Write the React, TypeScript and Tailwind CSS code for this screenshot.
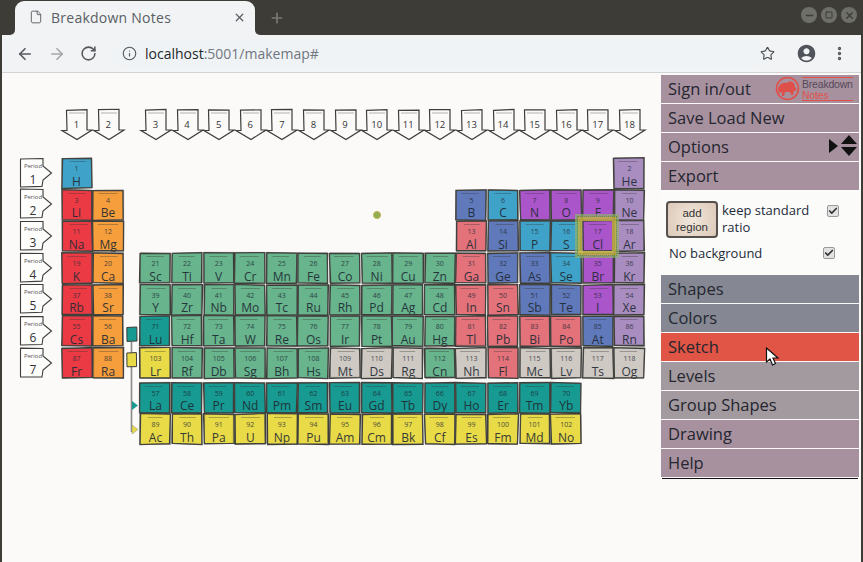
import { ArrowLeft, ArrowRight, Check, File, Info, Minus, MoreVertical, Plus, RotateCw, Square, Star, X } from "lucide-react";
import { MdAccountCircle } from "react-icons/md";

const blue = "bg-[#3fa3c9]";
const red = "bg-[#ec3a45]";
const orange = "bg-[#f69e3c]";
const green = "bg-[#67b48d]";
const teal = "bg-[#179a92]";
const yellow = "bg-[#e9da48]";
const gray = "bg-[#cec9c3]";
const pink = "bg-[#e4727b]";
const slate = "bg-[#6079bb]";
const purple = "bg-[#ab55cb]";
const lav = "bg-[#a98dc1]";

type Cell = { n: number; s: string; c: string; col: number; row: number };

// [symbol, colour, group] per element, row by row
const rows: [string, string, number][][] = [
  [["H", blue, 1], ["He", lav, 18]],
  [["Li", red, 1], ["Be", orange, 2], ["B", slate, 13], ["C", blue, 14], ["N", purple, 15], ["O", purple, 16], ["F", purple, 17], ["Ne", lav, 18]],
  [["Na", red, 1], ["Mg", orange, 2], ["Al", pink, 13], ["Si", slate, 14], ["P", blue, 15], ["S", blue, 16], ["Cl", purple, 17], ["Ar", lav, 18]],
  [["K", red, 1], ["Ca", orange, 2], ...["Sc", "Ti", "V", "Cr", "Mn", "Fe", "Co", "Ni", "Cu", "Zn"].map((s, i): [string, string, number] => [s, green, i + 3]), ["Ga", pink, 13], ["Ge", slate, 14], ["As", slate, 15], ["Se", blue, 16], ["Br", purple, 17], ["Kr", lav, 18]],
  [["Rb", red, 1], ["Sr", orange, 2], ...["Y", "Zr", "Nb", "Mo", "Tc", "Ru", "Rh", "Pd", "Ag", "Cd"].map((s, i): [string, string, number] => [s, green, i + 3]), ["In", pink, 13], ["Sn", pink, 14], ["Sb", slate, 15], ["Te", slate, 16], ["I", purple, 17], ["Xe", lav, 18]],
  [["Cs", red, 1], ["Ba", orange, 2], ["Lu", teal, 3], ...["Hf", "Ta", "W", "Re", "Os", "Ir", "Pt", "Au", "Hg"].map((s, i): [string, string, number] => [s, green, i + 4]), ["Tl", pink, 13], ["Pb", pink, 14], ["Bi", pink, 15], ["Po", pink, 16], ["At", slate, 17], ["Rn", lav, 18]],
  [["Fr", red, 1], ["Ra", orange, 2], ["Lr", yellow, 3], ...["Rf", "Db", "Sg", "Bh", "Hs"].map((s, i): [string, string, number] => [s, green, i + 4]), ["Mt", gray, 9], ["Ds", gray, 10], ["Rg", gray, 11], ["Cn", green, 12], ["Nh", gray, 13], ["Fl", pink, 14], ["Mc", gray, 15], ["Lv", gray, 16], ["Ts", gray, 17], ["Og", gray, 18]],
];

const numbers = [
  [1, 2],
  [3, 4, 5, 6, 7, 8, 9, 10],
  [11, 12, 13, 14, 15, 16, 17, 18],
  [19, 20, 21, 22, 23, 24, 25, 26, 27, 28, 29, 30, 31, 32, 33, 34, 35, 36],
  [37, 38, 39, 40, 41, 42, 43, 44, 45, 46, 47, 48, 49, 50, 51, 52, 53, 54],
  [55, 56, 71, 72, 73, 74, 75, 76, 77, 78, 79, 80, 81, 82, 83, 84, 85, 86],
  [87, 88, 103, 104, 105, 106, 107, 108, 109, 110, 111, 112, 113, 114, 115, 116, 117, 118],
];

// groups 1-2 sit after the period column, the rest after the little spacer column
const groupCol = (g: number) => (g < 3 ? g + 1 : g + 2);

const cells: Cell[] = rows.flatMap((row, r) =>
  row.map(([s, c, g], i) => ({ n: numbers[r][i], s, c, col: groupCol(g), row: r + 2 }))
);
["La", "Ce", "Pr", "Nd", "Pm", "Sm", "Eu", "Gd", "Tb", "Dy", "Ho", "Er", "Tm", "Yb"].forEach((s, i) =>
  cells.push({ n: 57 + i, s, c: teal, col: groupCol(i + 3), row: 10 })
);
["Ac", "Th", "Pa", "U", "Np", "Pu", "Am", "Cm", "Bk", "Cf", "Es", "Fm", "Md", "No"].forEach((s, i) =>
  cells.push({ n: 89 + i, s, c: yellow, col: groupCol(i + 3), row: 11 })
);

const jitter = (seed: number, amp: number) => {
  const v = Math.sin(seed * 12.9898) * 43758.5453;
  return +(((v - Math.floor(v)) - 0.5) * 2 * amp).toFixed(2);
};

function sketchPath(seed: number, x0: number, y0: number, x1: number, y1: number) {
  const p = [
    [x0, y0],
    [x1, y0],
    [x1, y1],
    [x0, y1],
  ].map(([x, y], i) => `${x + jitter(seed + i, 0.7)} ${y + jitter(seed + i + 9, 0.7)}`);
  return `M${p[0]} L${p[1]} L${p[2]} L${p[3]} Z`;
}

function ElementCell({ n, s, c, col, row }: Cell) {
  return (
    <div className={`relative ${s === "Cl" ? "z-10" : ""}`} style={{ gridColumn: col, gridRow: row }}>
      <div className={`relative w-[30px] h-[30px] mt-[0.5px] ml-[0.5px] flex flex-col items-center pt-[7px] text-[#1f2a33] ${c}`}>
        <span className="text-[7px] leading-[8px] opacity-80">{n}</span>
        <span className="text-[12px] leading-[13px] mt-[1.5px] opacity-90">{s}</span>
        <svg viewBox="0 0 30 30" className="absolute inset-0 w-[30px] h-[30px] overflow-visible" fill="none">
          <path d={sketchPath(n, 0, 0, 30, 30)} stroke="#3d3d39" strokeWidth="1.3" />
          <path d={sketchPath(n + 31, 0, 0, 30, 30)} stroke="#4b4b47" strokeWidth="0.8" opacity="0.7" />
          <path d={`M${6 + jitter(n, 2)} 3.5 L${24 + jitter(n + 2, 2)} 3.5`} stroke="#333" strokeWidth="0.7" opacity="0.5" />
        </svg>
      </div>
      {s === "Cl" && (
        <div className="absolute left-[-7px] top-[-7px] w-[44px] h-[44px] border-[3px] border-[#8cb06c]/70">
          <div className="w-full h-full border-[4px] border-[#c4b53e]/80 outline-1 outline-dotted outline-[#6f8c3a]" />
        </div>
      )}
    </div>
  );
}

function GroupArrow({ g }: { g: number }) {
  return (
    <div className="relative w-[31px] h-[31px] flex justify-center pt-[8px]" style={{ gridColumn: groupCol(g), gridRow: 1 }}>
      <svg viewBox="0 0 31 31" className="absolute inset-0 w-[31px] h-[31px] overflow-visible" fill="#fbfaf9">
        <path
          d={`M5.5 ${1 + jitter(g, 0.5)} L26 ${0.6 + jitter(g + 5, 0.5)} L26 21 L31 21 L16 30.5 L1 21.5 L6 21.5 Z`}
          stroke="#3d3d39"
          strokeWidth="1.2"
        />
        <path d="M8 4 L24 4" stroke="#555" strokeWidth="0.6" opacity="0.7" />
      </svg>
      <span className="relative text-[9.5px] leading-[12px] mt-[2px] text-[#333]">{g}</span>
    </div>
  );
}

function PeriodTag({ p }: { p: number }) {
  return (
    <div className="relative w-[32px] h-[30px] flex flex-col items-start pl-[2px]" style={{ gridColumn: 1, gridRow: p + 1 }}>
      <svg viewBox="0 0 32 30" className="absolute inset-0 w-[32px] h-[30px] overflow-visible" fill="#fdfdfc">
        <path
          d={`M0.5 ${0.5 + jitter(p, 0.6)} L23 0.5 L23 8 L31.5 15 L23 22 L22 ${28.5 + jitter(p + 3, 0.6)} L0.5 29 Z`}
          stroke="#3d3d39"
          strokeWidth="1.1"
        />
      </svg>
      <span className="relative w-[22px] text-center text-[6px] leading-[8px] mt-[4px] text-[#555]">Period</span>
      <span className="relative w-[22px] text-center text-[12px] leading-[12px] mt-[4px] text-[#333]">{p}</span>
    </div>
  );
}

function MenuItem({ label, color }: { label: string; color: string }) {
  return (
    <div className={`h-[28px] mb-[1px] pl-[7px] text-[16.5px] leading-[28px] text-[#242630] ${color}`}>{label}</div>
  );
}

function CheckBox() {
  return (
    <span className="w-[12px] h-[12px] rounded-[2px] border border-[#9a9a9a] bg-[#e2e2e2] flex items-center justify-center shrink-0">
      <Check size={10} strokeWidth={4} className="text-[#333]" />
    </span>
  );
}

function Logo() {
  return (
    <div className="absolute right-[6px] top-[1px] w-[78px] h-[25px] flex items-center">
      <svg viewBox="0 0 25 25" className="w-[25px] h-[25px] shrink-0">
        <circle cx="12.5" cy="12.5" r="11" fill="none" stroke="#e0504a" strokeWidth="1.6" />
        <path d="M3 13 C4 8 8 6 12 7 C15 4 20 6 20 11 L22 14 L19 15 L18 19 L16 19 L15 16 L10 16 L9 20 L7 20 L7 16 L4 17 Z" fill="#e0504a" />
      </svg>
      <div className="flex flex-col ml-[2px] w-[52px] border-t border-[#e0504a] font-['Liberation_Sans',sans-serif]">
        <span className="text-[10.5px] leading-[12px] text-[#54495a] tracking-[-0.2px]">Breakdown</span>
        <span className="text-[10.5px] leading-[10px] text-[#e0504a] border-b border-[#e0504a] tracking-[-0.2px]">Notes</span>
      </div>
    </div>
  );
}

export default function App() {
  return (
    <div className="w-[863px] h-[562px] overflow-hidden bg-[#3d3c37] font-['Open_Sans',sans-serif] flex flex-col">
      {/* title bar */}
      <div className="h-[35px] shrink-0 flex items-end relative pl-[15px]">
        <div className="relative w-[240px] h-[34px] bg-[#f1f3f4] rounded-t-[9px] flex items-center pl-[14px] pr-[9px] pb-[2px] text-[#5a5f66]">
          <span className="absolute left-[-5px] bottom-0 w-[5px] h-[5px] bg-[#f1f3f4]">
            <span className="block w-[5px] h-[5px] bg-[#3d3c37] rounded-br-[5px]" />
          </span>
          <span className="absolute right-[-5px] bottom-0 w-[5px] h-[5px] bg-[#f1f3f4]">
            <span className="block w-[5px] h-[5px] bg-[#3d3c37] rounded-bl-[5px]" />
          </span>
          <File size={14} strokeWidth={1.6} />
          <span className="ml-[8px] text-[14px] tracking-[0.25px] flex-1">Breakdown Notes</span>
          <X size={13} strokeWidth={2.4} />
        </div>
        <Plus size={16} strokeWidth={2.5} className="ml-[14px] mb-[9px] text-[#7a7a75]" />
        <div className="absolute right-[6px] top-[7px] flex gap-[4px] text-[#3d3c37]">
          <span className="w-[16px] h-[16px] rounded-full bg-[#6f6f6a] flex items-center justify-center"><Minus size={11} strokeWidth={3} /></span>
          <span className="w-[16px] h-[16px] rounded-full bg-[#6f6f6a] flex items-center justify-center"><Square size={8} strokeWidth={3} /></span>
          <span className="w-[16px] h-[16px] rounded-full bg-[#6f6f6a] flex items-center justify-center"><X size={11} strokeWidth={3} /></span>
        </div>
      </div>

      <div className="flex-1 mx-[2px] flex flex-col min-h-0">
        {/* toolbar */}
        <div className="h-[38px] shrink-0 bg-[#f1f3f4] border-b border-[#d2d3d4] flex items-center pl-[14px] pr-[12px] text-[#55595e]">
          <ArrowLeft size={18} strokeWidth={2.2} />
          <ArrowRight size={18} strokeWidth={2.2} className="ml-[14px] text-[#a4a6a8]" />
          <RotateCw size={17} strokeWidth={2.2} className="ml-[14px]" />
          <div className="ml-[15px] w-[655px] h-[28px] rounded-full bg-[#eff3f5] flex items-center pl-[10px]">
            <Info size={15} strokeWidth={1.8} />
            <span className="ml-[8px] text-[14px] text-[#23272c]">localhost</span>
            <span className="text-[14px] text-[#6f7680]">:5001/makemap#</span>
          </div>
          <Star size={15} strokeWidth={1.8} className="ml-[-7px] text-[#4a4d52]" />
          <MdAccountCircle size={21} className="ml-[21px] text-[#50535a]" />
          <MoreVertical size={17} strokeWidth={2.8} className="ml-[14px]" />
        </div>

        {/* page */}
        <div className="flex-1 min-h-0 bg-[#fbfaf9] flex relative">
          <div className="flex-1 relative pl-[18px] pt-[36px]">
            <div className="grid grid-cols-[41px_repeat(2,31.6px)_15.8px_repeat(16,31.6px)] grid-rows-[48.5px_repeat(7,31.7px)_3px_repeat(2,31.6px)] w-max">
              {Array.from({ length: 18 }, (_, i) => (
                <GroupArrow key={i} g={i + 1} />
              ))}
              {[1, 2, 3, 4, 5, 6, 7].map((p) => (
                <PeriodTag key={p} p={p} />
              ))}
              {cells.map((c) => (
                <ElementCell key={c.n} {...c} />
              ))}
              <svg viewBox="0 0 16 120" className="w-[16px] h-[120px] overflow-visible col-start-4 row-start-7 row-span-5">
                <path d="M7.5 26 L7.5 116" stroke="#8b8b86" strokeWidth="1.6" fill="none" />
                <path d="M2.8 11.5 L12.8 11 L13 25 L3 25.4 Z" fill="#179a92" stroke="#3d3d39" strokeWidth="1" />
                <path d="M2.8 37 L12.4 36.6 L12.6 50.6 L3 50.8 Z" fill="#e9da48" stroke="#3d3d39" strokeWidth="1" />
                <path d="M8 85 L14 89.5 L8 94 Z" fill="#179a92" />
                <path d="M8 109 L14 113.5 L8 118 Z" fill="#e9da48" stroke="#8b8b86" strokeWidth="0.5" />
              </svg>
            </div>
            <span className="absolute left-[371px] top-[138px] w-[8px] h-[8px] rounded-full bg-[#8fae55] border border-[#c2b04a]" />
          </div>

          {/* side menu */}
          <div className="w-[198px] shrink-0 mr-[2px] pt-[2px]">
            <div className="relative">
              <MenuItem label="Sign in/out" color="bg-[#a8919f]" />
              <Logo />
            </div>
            <MenuItem label="Save Load New" color="bg-[#a8919f]" />
            <div className="relative">
              <MenuItem label="Options" color="bg-[#a8919f]" />
              <div className="absolute right-[2px] top-[2px] flex items-center gap-[3px]">
                <span className="w-0 h-0 border-y-[7px] border-y-transparent border-l-[9px] border-l-[#111]" />
                <div className="flex flex-col gap-[3px]">
                  <span className="w-0 h-0 border-x-[8px] border-x-transparent border-b-[9px] border-b-[#111]" />
                  <span className="w-0 h-0 border-x-[8px] border-x-transparent border-t-[9px] border-t-[#111]" />
                </div>
              </div>
            </div>
            <div className="h-[28px] pl-[7px] text-[16.5px] leading-[28px] text-[#242630] bg-[#a8919f]">Export</div>

            <div className="h-[85px] bg-[#fbfbfa] pl-[5px] pt-[11px] text-[13px] text-[#232b3a]">
              <div className="flex items-start">
                <button className="w-[52px] h-[37px] border-2 border-[#55504d] rounded-[4px] bg-[radial-gradient(circle,#f1e7dd,#dcc9b8)] text-[11.5px] leading-[14px] text-[#333] font-['Liberation_Sans',sans-serif]">
                  add<br />region
                </button>
                <span className="ml-[4px] w-[96px] leading-[17px] mt-[1px]">keep standard ratio</span>
                <span className="ml-[9px] mt-[4px]"><CheckBox /></span>
              </div>
              <div className="flex items-center mt-[6px] pl-[3px]">
                <span className="w-[154px] leading-[18px]">No background</span>
                <CheckBox />
              </div>
            </div>

            <MenuItem label="Shapes" color="bg-[#858892]" />
            <MenuItem label="Colors" color="bg-[#858892]" />
            <MenuItem label="Sketch" color="bg-[#e05545]" />
            <MenuItem label="Levels" color="bg-[#a39a9f]" />
            <MenuItem label="Group Shapes" color="bg-[#a39a9f]" />
            <MenuItem label="Drawing" color="bg-[#a8919f]" />
            <MenuItem label="Help" color="bg-[#a8919f]" />
            <div className="h-px mx-[1px] bg-[#111]" />
          </div>

          {/* mouse pointer */}
          <svg viewBox="0 0 14 19" className="absolute left-[763px] top-[274px] w-[14px] h-[19px]">
            <path d="M1.5 1 L1.5 15 L5 12 L7.5 18 L10.5 16.5 L8 11 L13 11 Z" fill="#fff" stroke="#111" strokeWidth="1.2" />
          </svg>
        </div>
      </div>
    </div>
  );
}
